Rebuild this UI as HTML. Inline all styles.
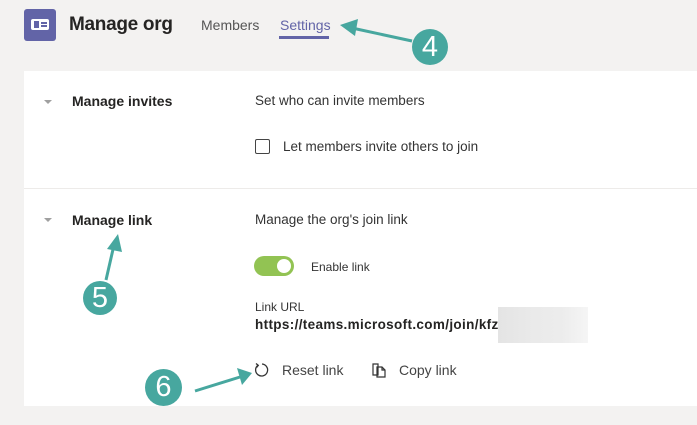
<!DOCTYPE html>
<html><head><style>
body{margin:0;width:697px;height:425px;background:#f3f2f1;font-family:"Liberation Sans",sans-serif;position:relative;overflow:hidden;color:#252423}
.a{position:absolute;white-space:nowrap}
.b{font-weight:bold;font-size:14px}
.t{font-size:13.5px;color:#333}
.tri{position:absolute;width:0;height:0;border-left:4px solid transparent;border-right:4px solid transparent;border-top:4px solid #a0a0a0}
.c{position:absolute;border-radius:50%;background:#47a79f;color:#fff;font-size:29px;text-align:center;font-family:"Liberation Sans",sans-serif}
</style></head><body>
<div class="a" style="left:24px;top:9px;width:32px;height:32px;background:#6264a7;border-radius:3px"></div>
<div class="a" style="left:31px;top:19px;width:18px;height:11px;background:#fff;border-radius:2px"></div>
<div class="a" style="left:34px;top:21px;width:5px;height:7px;background:#6264a7"></div>
<div class="a" style="left:41px;top:22px;width:6px;height:1.5px;background:#6264a7"></div>
<div class="a" style="left:41px;top:25px;width:6px;height:1.5px;background:#6264a7"></div>
<div class="a" style="left:69px;top:14px;font-size:19px;font-weight:bold;letter-spacing:-0.3px">Manage org</div>
<div class="a" style="left:201px;top:17px;font-size:14px;color:#555">Members</div>
<div class="a" style="left:280px;top:17px;font-size:14px;color:#6264a7">Settings</div>
<div class="a" style="left:279px;top:36px;width:50px;height:3px;background:#6264a7"></div>
<div class="a" style="left:24px;top:71px;width:673px;height:335px;background:#fff"></div>
<div class="a" style="left:24px;top:188px;width:673px;height:1px;background:#edebe9"></div>
<div class="tri" style="left:44px;top:100px"></div>
<div class="a b" style="left:72px;top:93px">Manage invites</div>
<div class="a t" style="left:255px;top:93px">Set who can invite members</div>
<div class="a" style="left:255px;top:139px;width:13px;height:13px;border:1.5px solid #444;border-radius:2px"></div>
<div class="a t" style="left:283px;top:139px">Let members invite others to join</div>
<div class="tri" style="left:44px;top:218px"></div>
<div class="a b" style="left:72px;top:212px">Manage link</div>
<div class="a t" style="left:255px;top:212px">Manage the org's join link</div>
<div class="a" style="left:254px;top:256px;width:40px;height:20px;background:#92c353;border-radius:10px"></div>
<div class="a" style="left:277px;top:259px;width:14px;height:14px;background:#fff;border-radius:50%"></div>
<div class="a" style="left:311px;top:260px;font-size:12px;color:#333">Enable link</div>
<div class="a" style="left:255px;top:300px;font-size:12px;color:#333">Link URL</div>
<div class="a" style="left:255px;top:317px;font-size:13.5px;font-weight:bold;letter-spacing:0.35px">https://teams.microsoft.com/join/kfz</div>
<div class="a" style="left:498px;top:307px;width:90px;height:36px;background:linear-gradient(90deg,#e4e4e4,#eaeaea 40%,#ececec 70%,#f5f5f5)"></div>
<svg class="a" style="left:253px;top:361px" width="18" height="18" viewBox="0 0 18 18"><path d="M5 4.2A6 6 0 1 0 9 3" fill="none" stroke="#333" stroke-width="1.3"/><path d="M3 2.5L5.3 4.4 3.6 6.5" fill="none" stroke="#333" stroke-width="1.3"/></svg>
<div class="a" style="left:282px;top:362px;font-size:14px;color:#444">Reset link</div>
<svg class="a" style="left:371px;top:361px" width="18" height="18" viewBox="0 0 18 18"><path d="M2 3h5v11H2z M6 6h5l3 3v7H6z M11 6v3h3" fill="none" stroke="#333" stroke-width="1.2"/></svg>
<div class="a" style="left:399px;top:362px;font-size:14px;color:#444">Copy link</div>
<svg class="a" style="left:0;top:0" width="697" height="425">
<g fill="#47a79f" stroke="#47a79f">
<line x1="412" y1="41" x2="352" y2="28" stroke-width="3"/><polygon points="340,25 358,19 355,36" stroke="none"/>
<line x1="106" y1="280" x2="114" y2="245" stroke-width="3"/><polygon points="118,234 122,252 107,249" stroke="none"/>
<line x1="195" y1="391" x2="240" y2="377" stroke-width="3"/><polygon points="252,373 237,368 242,385" stroke="none"/>
</g></svg>
<div class="c" style="left:412px;top:29px;width:36px;height:36px;line-height:36px">4</div>
<div class="c" style="left:83px;top:281px;width:34px;height:34px;line-height:34px">5</div>
<div class="c" style="left:145px;top:369px;width:37px;height:37px;line-height:37px">6</div>
</body></html>
